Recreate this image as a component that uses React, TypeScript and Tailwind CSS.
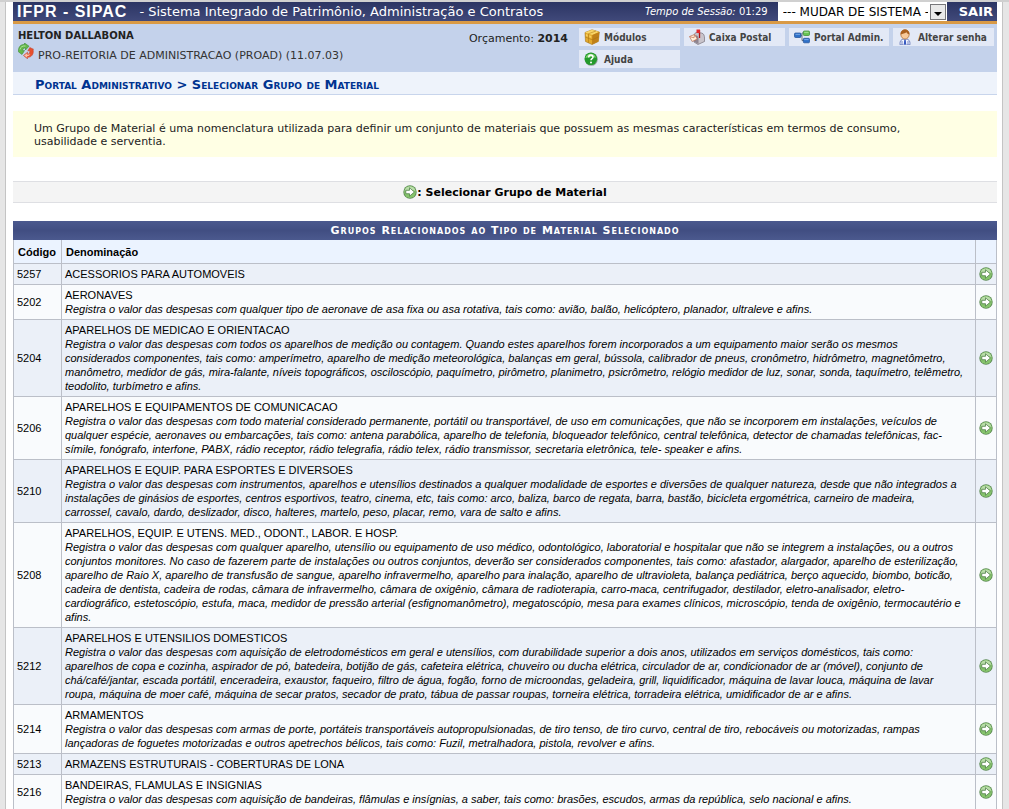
import React from "react";

type Group = { code: string; name: string; text?: string };

const groups: Group[] = [
  { code: "5257", name: "ACESSORIOS PARA AUTOMOVEIS" },
  {
    code: "5202",
    name: "AERONAVES",
    text: "Registra o valor das despesas com qualquer tipo de aeronave de asa fixa ou asa rotativa, tais como: avião, balão, helicóptero, planador, ultraleve e afins.",
  },
  {
    code: "5204",
    name: "APARELHOS DE MEDICAO E ORIENTACAO",
    text: `Registra o valor das despesas com todos os aparelhos de medição ou contagem. Quando estes aparelhos forem incorporados a um equipamento maior serão os mesmos
considerados componentes, tais como: amperímetro, aparelho de medição meteorológica, balanças em geral, bússola, calibrador de pneus, cronômetro, hidrômetro, magnetômetro,
manômetro, medidor de gás, mira-falante, níveis topográficos, osciloscópio, paquímetro, pirômetro, planimetro, psicrômetro, relógio medidor de luz, sonar, sonda, taquímetro, telêmetro,
teodolito, turbímetro e afins.`,
  },
  {
    code: "5206",
    name: "APARELHOS E EQUIPAMENTOS DE COMUNICACAO",
    text: `Registra o valor das despesas com todo material considerado permanente, portátil ou transportável, de uso em comunicações, que não se incorporem em instalações, veículos de
qualquer espécie, aeronaves ou embarcações, tais como: antena parabólica, aparelho de telefonia, bloqueador telefônico, central telefônica, detector de chamadas telefônicas, fac-
símile, fonógrafo, interfone, PABX, rádio receptor, rádio telegrafia, rádio telex, rádio transmissor, secretaria eletrônica, tele- speaker e afins.`,
  },
  {
    code: "5210",
    name: "APARELHOS E EQUIP. PARA ESPORTES E DIVERSOES",
    text: `Registra o valor das despesas com instrumentos, aparelhos e utensílios destinados a qualquer modalidade de esportes e diversões de qualquer natureza, desde que não integrados a
instalações de ginásios de esportes, centros esportivos, teatro, cinema, etc, tais como: arco, baliza, barco de regata, barra, bastão, bicicleta ergométrica, carneiro de madeira,
carrossel, cavalo, dardo, deslizador, disco, halteres, martelo, peso, placar, remo, vara de salto e afins.`,
  },
  {
    code: "5208",
    name: "APARELHOS, EQUIP. E UTENS. MED., ODONT., LABOR. E HOSP.",
    text: `Registra o valor das despesas com qualquer aparelho, utensílio ou equipamento de uso médico, odontológico, laboratorial e hospitalar que não se integrem a instalações, ou a outros
conjuntos monitores. No caso de fazerem parte de instalações ou outros conjuntos, deverão ser considerados componentes, tais como: afastador, alargador, aparelho de esterilização,
aparelho de Raio X, aparelho de transfusão de sangue, aparelho infravermelho, aparelho para inalação, aparelho de ultravioleta, balança pediátrica, berço aquecido, biombo, boticão,
cadeira de dentista, cadeira de rodas, câmara de infravermelho, câmara de oxigênio, câmara de radioterapia, carro-maca, centrifugador, destilador, eletro-analisador, eletro-
cardiográfico, estetoscópio, estufa, maca, medidor de pressão arterial (esfignomanômetro), megatoscópio, mesa para exames clínicos, microscópio, tenda de oxigênio, termocautério e
afins.`,
  },
  {
    code: "5212",
    name: "APARELHOS E UTENSILIOS DOMESTICOS",
    text: `Registra o valor das despesas com aquisição de eletrodomésticos em geral e utensílios, com durabilidade superior a dois anos, utilizados em serviços domésticos, tais como:
aparelhos de copa e cozinha, aspirador de pó, batedeira, botijão de gás, cafeteira elétrica, chuveiro ou ducha elétrica, circulador de ar, condicionador de ar (móvel), conjunto de
chá/café/jantar, escada portátil, enceradeira, exaustor, faqueiro, filtro de água, fogão, forno de microondas, geladeira, grill, liquidificador, máquina de lavar louca, máquina de lavar
roupa, máquina de moer café, máquina de secar pratos, secador de prato, tábua de passar roupas, torneira elétrica, torradeira elétrica, umidificador de ar e afins.`,
  },
  {
    code: "5214",
    name: "ARMAMENTOS",
    text: `Registra o valor das despesas com armas de porte, portáteis transportáveis autopropulsionadas, de tiro tenso, de tiro curvo, central de tiro, rebocáveis ou motorizadas, rampas
lançadoras de foguetes motorizadas e outros apetrechos bélicos, tais como: Fuzil, metralhadora, pistola, revolver e afins.`,
  },
  { code: "5213", name: "ARMAZENS ESTRUTURAIS - COBERTURAS DE LONA" },
  {
    code: "5216",
    name: "BANDEIRAS, FLAMULAS E INSIGNIAS",
    text: "Registra o valor das despesas com aquisição de bandeiras, flâmulas e insígnias, a saber, tais como: brasões, escudos, armas da república, selo nacional e afins.",
  },
];

function ArrowIcon() {
  return (
    <svg viewBox="0 0 14 14" className="block size-[14px]" aria-hidden="true">
      <circle cx="7" cy="7" r="6.7" fill="#5c8a54" />
      <circle cx="7" cy="7" r="5.900" fill="#86c46c" />
      <path d="M1.600 6a5.500 5.500 0 0 1 10.800 0Q7 3.500 1.600 6Z" fill="#b9dda9" />
      <path d="M2.800 5.300h3.700V2.800L11.400 7l-4.900 4.200V8.700H2.800Z" fill="#fff" stroke="#44743c" strokeWidth=".7" />
    </svg>
  );
}

function RefreshIcon() {
  return (
    <svg viewBox="0 0 16 16" className="block size-4" aria-hidden="true">
      <path d="M.5 8.500C.3 4 2.500 1.200 6.500 1.500V0L11 3.200L7.500 7V5C5.500 4.800 4.500 6 4.800 7.800L6.500 7.500L4 11.500L.3 8.700Z" fill="#62b84a" stroke="#3d8a34" strokeWidth=".6" />
      <path d="M2 6.500C2.500 3.800 4.500 2.700 7.500 3" fill="none" stroke="#b9e6a6" strokeWidth=".9" />
      <path d="M15 6.500C16.200 11 13.500 14.500 9.500 14.300V15.800L5.500 12.500L9.500 9.300V11C11.500 11 12.300 9.500 11.500 7.500L9.800 8L11.800 4.500L15.500 6.300Z" fill="#e8502e" stroke="#c4452f" strokeWidth=".6" />
      <path d="M6 12.500l3.200-2.300v1.500l3.200-.4c-1 1.800-3.200 1.900-3.200 1.900v1.500Z" fill="#f9c1a8" />
    </svg>
  );
}

function BoxIcon() {
  return (
    <svg viewBox="0 0 16 16" className="block size-4" aria-hidden="true">
      <path d="M1 3.500L8 .8L15.300 3L14.300 12.500L8 15.500L1.500 12.500Z" fill="#e3a92c" stroke="#a3741a" strokeWidth=".6" />
      <path d="M1 3.500L8 .8L15.300 3L8.300 6Z" fill="#f8d568" />
      <path d="M8.300 6L15.300 3L14.300 12.500L8 15.500Z" fill="#bf8019" />
      <path d="M4.500 4.700V13.800M1.300 8L8.200 10.800L14.800 7.800M4.500 4.700L12 2" fill="none" stroke="#a5700f" strokeWidth=".5" />
      <path d="M2 5l1.700.7v2L2 7ZM5.300 6.200l2 .8v2l-2-.8Z" fill="#f6cf60" />
    </svg>
  );
}

function HelpIcon() {
  return (
    <svg viewBox="0 0 14 14" className="block size-[14px]" aria-hidden="true">
      <circle cx="7.300" cy="7.300" r="6.500" fill="#8f9f99" />
      <circle cx="6.800" cy="6.800" r="6.300" fill="#239a2b" />
      <path d="M1.500 6a5.400 5.400 0 0 1 10.500-.3Q7 4 1.500 6Z" fill="#7fd070" />
      <path d="M4.700 5.400C4.800 2.300 9.200 2.400 9 5.200C8.900 6.600 7 6.700 7 8.300" fill="none" stroke="#fff" strokeWidth="1.500" />
      <circle cx="7" cy="10.400" r="1" fill="#fff" />
    </svg>
  );
}

function MailboxIcon() {
  return (
    <svg viewBox="0 0 16 16" className="block size-4" aria-hidden="true">
      <path d="M5 7C5 4.500 6.500 3.500 8 3.500L12.500 4C15 4.500 15.500 7 15.500 9V12.500L9 15.500L5 13Z" fill="#c9c4cb" stroke="#77717b" strokeWidth=".7" />
      <path d="M9.500 15V9.500C9.500 5.500 5 5 5 8.500V12.800Z" fill="#8d8490" />
      <path d="M.5 7.500L5.500 5.500L8.300 10L3.200 12.500Z" fill="#fff2dc" stroke="#b86b50" strokeWidth=".7" />
      <path d="M.8 7.700L5 8.800L5.600 5.700" fill="none" stroke="#c4694d" strokeWidth=".7" />
      <path d="M10.500 9V1" stroke="#b01515" strokeWidth="1.300" />
      <path d="M7.500 .5H11V4H7.500Z" fill="#e3282b" />
    </svg>
  );
}

function PortalIcon() {
  return (
    <svg viewBox="0 0 16 14" className="block h-[14px] w-4" aria-hidden="true">
      <path d="M5 5.500H8M8 3H10M8 3V10.500H10" fill="none" stroke="#6b7683" strokeWidth="1" />
      <rect x=".5" y="3" width="6.500" height="4.500" rx="1" fill="#2f71c8" stroke="#1d4e96" strokeWidth=".7" />
      <rect x="9.300" y="1" width="6.200" height="4.500" rx="1" fill="#67c351" stroke="#38862b" strokeWidth=".7" />
      <rect x="9.300" y="8.300" width="6.200" height="4.500" rx="1" fill="#2f71c8" stroke="#1d4e96" strokeWidth=".7" />
      <path d="M10.200 2.300H14.500" stroke="#bdebb0" strokeWidth=".8" />
      <path d="M10.200 9.600H14.500M1.500 4.300H6" stroke="#8fbaf0" strokeWidth=".8" />
    </svg>
  );
}

function PersonIcon() {
  return (
    <svg viewBox="0 0 14 16" className="block h-4 w-[14px]" aria-hidden="true">
      <path d="M2.200 16C1.500 11.500 3.500 10 7 10S12.500 11.500 11.800 16Z" fill="#f3f6ff" stroke="#5367b0" strokeWidth=".8" />
      <path d="M4 12V16M10 12V16" stroke="#5367b0" strokeWidth=".8" />
      <path d="M6.300 10.500H7.700L8.200 15L7 16L5.800 15Z" fill="#3658c0" />
      <ellipse cx="7" cy="5.300" rx="4.200" ry="4.800" fill="#f7c99a" stroke="#a8662c" strokeWidth=".7" />
      <path d="M2.700 5.500C1.800-1 12.200-1 11.300 5.500C9.500 5 8.800 3.700 8.500 3.200C7 4.600 4.500 4.700 2.700 5.500Z" fill="#a9601f" />
    </svg>
  );
}

const links = [
  { label: "Módulos", icon: <BoxIcon /> },
  { label: "Caixa Postal", icon: <MailboxIcon /> },
  { label: "Portal Admin.", icon: <PortalIcon /> },
  { label: "Alterar senha", icon: <PersonIcon /> },
  { label: "Ajuda", icon: <HelpIcon /> },
];

export default function App() {
  return (
    <div className="flex min-h-screen border-t-2 border-[#d0d0d0] bg-white font-['Verdana','DejaVu_Sans',sans-serif] text-[11px] text-black">
      <div className="w-[6px] shrink-0 border-r border-[#c4c4c4] bg-[#e6e6e6]" />
      <div className="min-w-0 grow pr-[5px] pl-[7px]">
        <header>
          <div className="flex h-[22px] items-center border-b-[3px] border-[#d99a45] bg-gradient-to-b from-[#2c3563] to-[#40497a] pl-1 whitespace-nowrap text-white">
            <h1 className="font-['Liberation_Sans',Arial,sans-serif] text-[16px] font-bold tracking-[1px]">IFPR - SIPAC</h1>
            <span className="ml-3 text-[13px]">- Sistema Integrado de Patrimônio, Administração e Contratos</span>
            <span className="mr-[10px] ml-auto text-[10px]">
              <em>Tempo de Sessão:</em> 01:29
            </span>
            <div className="relative h-[19px] w-[169px] bg-white">
              <select
                aria-label="Mudar de sistema"
                className="block h-[19px] w-[150px] appearance-none overflow-hidden bg-white pt-[2px] pl-[5px] text-[12px] leading-[17px] text-black outline-none"
              >
                <option>--- MUDAR DE SISTEMA ---</option>
              </select>
              <span className="pointer-events-none absolute top-[2px] right-px flex h-4 w-4 items-center justify-center border border-[#77777a] bg-[#e9e9e9]">
                <svg viewBox="0 0 8 4" className="mt-1 h-1 w-2" aria-hidden="true">
                  <path d="M0 0H8L4 4Z" fill="#000" />
                </svg>
              </span>
            </div>
            <a href="#sair" className="mr-1 ml-3 text-[13px] font-bold">
              SAIR
            </a>
          </div>
          <div className="flex h-12 bg-[#c4d2eb] text-[#222]">
            <div className="grow pl-[5px] whitespace-nowrap">
              <p className="mt-[5px] text-[10px] leading-[14px] font-bold">HELTON DALLABONA</p>
              <p className="flex items-start gap-1 text-[11px] leading-[14px] text-[#333]">
                <RefreshIcon />
                <span className="mt-[6px]">PRO-REITORIA DE ADMINISTRACAO (PROAD) (11.07.03)</span>
              </p>
            </div>
            <p className="mt-2 mr-[11px] text-[11px] leading-[14px] whitespace-nowrap">
              Orçamento: <b>2014</b>
            </p>
            <nav className="mt-1 mr-[3px] grid shrink-0 grid-cols-[101px_101px_100px_101px] content-start gap-x-1 gap-y-1">
              {links.map((l) => (
                <a
                  key={l.label}
                  href="#menu"
                  className="flex h-[18px] items-center bg-[#e3e9f6] pl-[5px] font-['DejaVu_Sans_Condensed','DejaVu_Sans',sans-serif] text-[10px] font-bold whitespace-nowrap text-[#444]"
                >
                  <span className="flex w-5 shrink-0">{l.icon}</span>
                  {l.label}
                </a>
              ))}
            </nav>
          </div>
          <h2 className="h-[23px] border-b border-[#c8d5ec] bg-[#eef3fb] pl-[22px] text-[13px] leading-[25px] font-bold whitespace-nowrap text-[#003390] [font-variant:small-caps]">
            Portal Administrativo &gt; Selecionar Grupo de Material
          </h2>
        </header>

        <main>
          <p className="mt-4 bg-[#ffffe4] px-[21px] pt-[11px] pb-[9px] text-[11px] leading-[13px] whitespace-pre-line text-[#222]">
            {`Um Grupo de Material é uma nomenclatura utilizada para definir um conjunto de materiais que possuem as mesmas características em termos de consumo,
usabilidade e serventia.`}
          </p>
          <div className="mt-6 flex h-[22px] items-end justify-center border-y border-[#dedfe3] bg-[#f4f4f4] pb-px text-[11px] leading-4 font-bold">
            <span className="pb-[2px]">
              <ArrowIcon />
            </span>
            : Selecionar Grupo de Material
          </div>
          <table className="mt-[18px] w-full border-collapse font-['Liberation_Sans',Arial,sans-serif] leading-[14px]">
            <caption className="h-[19px] bg-gradient-to-b from-[#4b598e] via-[#414e82] to-[#4b598e] font-['Verdana','DejaVu_Sans',sans-serif] text-[11px] leading-[20px] font-bold tracking-[1px] text-white [font-variant:small-caps]">
              Grupos Relacionados ao Tipo de Material Selecionado
            </caption>
            <thead>
              <tr className="h-[23px] bg-[#ebf3ff] text-left">
                <th className="w-[48px] border border-t-0 border-[#bbbfc8] px-1 pt-[2px]">Código</th>
                <th className="border border-t-0 border-[#bbbfc8] px-1 pt-[2px]">Denominação</th>
                <th className="w-[21px] border border-t-0 border-[#bbbfc8]" aria-label="Selecionar" />
              </tr>
            </thead>
            <tbody>
              {groups.map((g) => (
                <tr key={g.code} className="bg-[#f9fbfd] odd:bg-[#ebf0f8]">
                  <td className="border border-[#bbbfc8] p-[3px]">{g.code}</td>
                  <td className="border border-[#bbbfc8] py-[3px] pr-0 pl-[3px]">
                    {g.name}
                    {g.text && <em className="block whitespace-pre-line">{g.text}</em>}
                  </td>
                  <td className="border border-[#bbbfc8] p-[3px]">
                    <button type="button" aria-label={`Selecionar ${g.name}`} className="block">
                      <ArrowIcon />
                    </button>
                  </td>
                </tr>
              ))}
            </tbody>
          </table>
        </main>
      </div>
      <div className="w-[7px] shrink-0 border-l border-[#c4c4c4] bg-[#e6e6e6]" />
    </div>
  );
}
